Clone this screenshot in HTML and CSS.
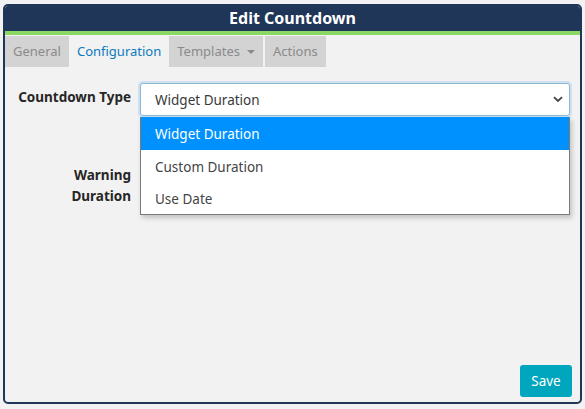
FILE: index.html
```html
<!DOCTYPE html>
<html>
<head>
<meta charset="utf-8">
<link rel="stylesheet" href="styles.css">
</head>
<body>
<div class="panel">
  <div class="header">Edit Countdown</div>
  <div class="tabs">
    <div class="tab">General</div>
    <div class="tab active">Configuration</div>
    <div class="tab">Templates <span class="caret"></span></div>
    <div class="tab">Actions</div>
  </div>
  <div class="content">
    <div class="row first">
      <div class="label">Countdown Type</div>
      <div class="field">
        <div class="select">
          <span>Widget Duration</span>
          <svg class="chev" width="10" height="7" viewBox="0 0 10 7"><path d="M1 1.2 L5 5 L9 1.2" fill="none" stroke="#444" stroke-width="1.8"/></svg>
        </div>
        <div class="menu">
          <div class="opt sel">Widget Duration</div>
          <div class="opt">Custom Duration</div>
          <div class="opt">Use Date</div>
        </div>
      </div>
    </div>
    <div class="row second">
      <div class="label">Warning<br>Duration</div>
      <div class="field"></div>
    </div>
  </div>
  <div class="footer">
    <button class="save">Save</button>
  </div>
</div>
</body>
</html>
```
FILE: styles.css
```css
html, body {
  margin: 0;
  padding: 0;
  background: #f2f2f2;
}
body {
  padding: 4px 3px 5px 3px;
  font-family: "Noto Sans", "Open Sans", sans-serif;
}
.panel {
  width: 579px;
  height: 400px;
  box-sizing: border-box;
  border: 2px solid #1f3658;
  border-radius: 5px;
  background: #f2f2f2;
  display: flex;
  flex-direction: column;
  overflow: hidden;
}
.header {
  background: #1f3658;
  color: #fff;
  height: 25px;
  line-height: 25px;
  text-align: center;
  font-weight: bold;
  font-size: 16px;
  border-bottom: 4px solid #8bd863;
}
.tabs {
  display: flex;
  margin-top: 1px;
  height: 31px;
}
.tab {
  background: #d3d3d3;
  color: #8a8a8a;
  font-size: 13px;
  line-height: 31px;
  padding: 0 8px;
  display: flex;
  align-items: center;
  gap: 7px;
}
.tab:nth-child(4) { margin-left: 2px; }
.tab.active {
  background: #f2f2f2;
  color: #0b7bbd;
}
.caret {
  width: 0; height: 0;
  border-left: 4px solid transparent;
  border-right: 4px solid transparent;
  border-top: 4px solid #8a8a8a;
}
.content {
  flex: 1;
  padding-top: 16px;
}
.row {
  display: flex;
}
.label {
  width: 126px;
  text-align: right;
  font-weight: bold;
  font-size: 13.5px;
  color: #262626;
  line-height: 21px;
  padding-top: 4px;
}
.field {
  margin-left: 9px;
  width: 430px;
  position: relative;
}
.select {
  height: 33px;
  box-sizing: border-box;
  background: #fff;
  border: 1px solid #8fb8d6;
  border-radius: 3px;
  box-shadow: 0 0 0 2px #cfe0ee;
  display: flex;
  align-items: center;
  justify-content: space-between;
  padding: 0 6px 0 14px;
  font-size: 13.5px;
  color: #3a3a3a;
}
.menu {
  position: absolute;
  left: 0;
  top: 34px;
  width: 430px;
  box-sizing: border-box;
  background: #fff;
  border: 1px solid #7a7a7a;
  border-top: none;
  box-shadow: 2px 3px 5px rgba(0,0,0,0.2);
  z-index: 2;
}
.opt {
  height: 33px;
  line-height: 35px;
  padding-left: 14px;
  font-size: 13.5px;
  color: #444;
}
.opt:last-child { height: 31px; line-height: 33px; }
.opt.sel {
  background: #0091ff;
  color: #fff;
}
.second {
  margin-top: 45px;
}
.footer {
  display: flex;
  justify-content: flex-end;
  padding: 0 8px 5px 0;
}
.save {
  width: 52px;
  height: 32px;
  border: none;
  border-radius: 3px;
  background: #00a6bd;
  color: #fff;
  font-family: "Noto Sans", "Open Sans", sans-serif;
  font-size: 13.5px;
  padding: 0;
}
```
